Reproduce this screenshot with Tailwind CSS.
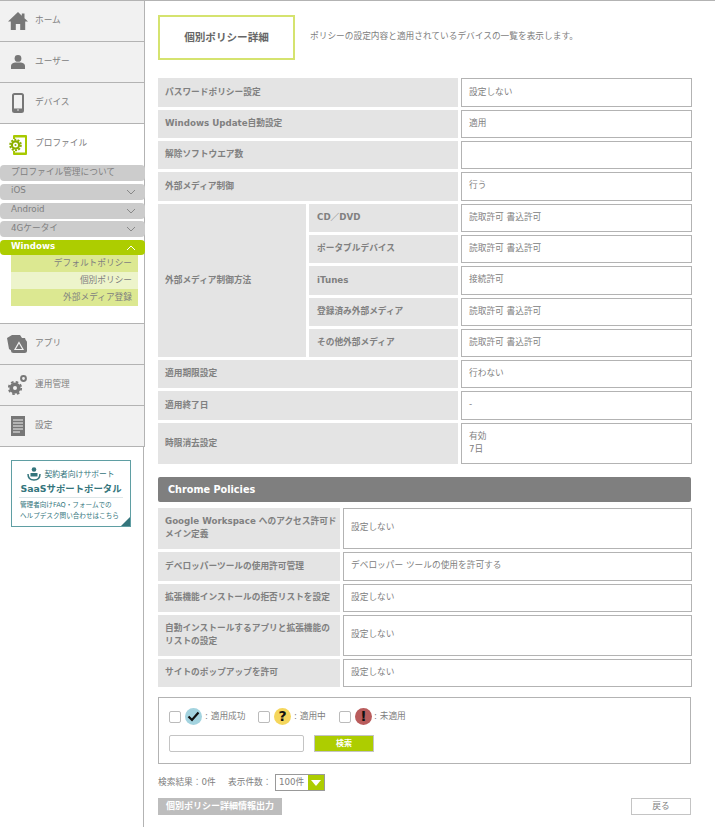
<!DOCTYPE html>
<html lang="ja">
<head>
<meta charset="utf-8">
<title>個別ポリシー詳細</title>
<script src="https://cdn.jsdelivr.net/npm/@tailwindcss/browser@4"></script>
</head>
<body class="bg-white font-['DejaVu_Sans','Noto_Sans_CJK_JP',sans-serif] text-[8.7px] leading-[13px] text-[#808080] overflow-hidden">
<div class="flex h-[827px] w-[715px] overflow-hidden border-t border-[#b3b3b3]">

  <!-- sidebar -->
  <aside class="w-[145px] shrink-0">
    <div class="w-[145px] border-r border-[#b3b3b3] bg-[#f1f1f1]">
      <a class="flex h-[41px] items-center border-b border-[#b3b3b3]">
        <span class="flex w-[35px] justify-center"><svg width="20" height="18" viewBox="0 0 20 18"><path fill="#777" d="M10 0 0 9.500h2.800V18h5v-6h4.400v6h5V9.500H20l-3.500-3.300V1.500h-2.700v2.200z"/></svg></span>
        <span class="pb-[2px]">ホーム</span>
      </a>
      <a class="flex h-[41px] items-center border-b border-[#b3b3b3]">
        <span class="flex w-[35px] justify-center"><svg width="14" height="14" viewBox="0 0 14 14"><ellipse cx="7" cy="3.400" rx="3.400" ry="3.400" fill="#777"/><path fill="#777" d="M0 14v-3q0-3 4-3.500h6q4 .5 4 3.500v3z"/></svg></span>
        <span class="pb-[2px]">ユーザー</span>
      </a>
      <a class="flex h-[41px] items-center border-b border-[#b3b3b3]">
        <span class="flex w-[35px] justify-center"><svg width="12" height="20" viewBox="0 0 12 20"><rect x="1" y="1" width="10" height="18" rx="1.500" fill="none" stroke="#777" stroke-width="2"/><rect x="1" y="15.500" width="10" height="3" fill="#777"/><circle cx="6" cy="17" r=".8" fill="#f1f1f1"/></svg></span>
        <span class="pb-[2px]">デバイス</span>
      </a>
    </div>
    <div class="w-[145px] border-r border-[#b3b3b3] pb-[17px]">
      <a class="flex h-[41px] items-center">
        <span class="flex w-[35px] justify-center"><svg width="18" height="20" viewBox="0 0 18 20"><path fill="#a8c900" d="M5 0h12a1 1 0 0 1 1 1v18a1 1 0 0 1-1 1H5a1 1 0 0 1-1-1v-3h2v1.500h10V2.500H6V4H4V1a1 1 0 0 1 1-1z"/><circle cx="6.500" cy="10" r="5.300" fill="none" stroke="#8cb000" stroke-width="2" stroke-dasharray="2 1.300"/><circle cx="6.500" cy="10" r="3.600" fill="none" stroke="#8cb000" stroke-width="2.200"/><circle cx="6.500" cy="10" r="1" fill="#8cb000"/></svg></span>
        <span class="pb-[3px]">プロファイル</span>
      </a>
      <ul class="flex flex-col gap-[2.750px]">
        <li class="flex h-[16px] w-[145px] items-center rounded-[4px] bg-[#cccccc] pl-[11px] pb-[2px]">プロファイル管理について</li>
        <li class="flex h-[16px] w-[145px] items-center justify-between rounded-[4px] bg-[#cccccc] pl-[11px] pr-[9px]"><span class="pb-[2px]">iOS</span><svg width="10" height="6" viewBox="0 0 10 6"><path d="M1 1l4 4 4-4" fill="none" stroke="#888" stroke-width="1"/></svg></li>
        <li class="flex h-[16px] w-[145px] items-center justify-between rounded-[4px] bg-[#cccccc] pl-[11px] pr-[9px]"><span class="pb-[2px]">Android</span><svg width="10" height="6" viewBox="0 0 10 6"><path d="M1 1l4 4 4-4" fill="none" stroke="#888" stroke-width="1"/></svg></li>
        <li class="flex h-[16px] w-[145px] items-center justify-between rounded-[4px] bg-[#cccccc] pl-[11px] pr-[9px]"><span class="pb-[2px]">4Gケータイ</span><svg width="10" height="6" viewBox="0 0 10 6"><path d="M1 1l4 4 4-4" fill="none" stroke="#888" stroke-width="1"/></svg></li>
        <li>
          <div class="flex h-[15px] w-[145px] items-center justify-between rounded-[4px] bg-[#adcd00] pl-[11px] pr-[9px] font-bold text-white"><span class="pb-[2px]">Windows</span><svg width="10" height="6" viewBox="0 0 10 6"><path d="M1 5l4-4 4 4" fill="none" stroke="#fff" stroke-width="1"/></svg></div>
          <div class="ml-[11px] w-[127px] text-right">
            <div class="h-[17px] bg-[#dce891] pr-[6px] leading-[16px]">デフォルトポリシー</div>
            <div class="h-[17px] bg-[#edf4cb] pr-[6px] leading-[16px]">個別ポリシー</div>
            <div class="h-[17px] bg-[#dce891] pr-[6px] leading-[16px]">外部メディア登録</div>
          </div>
        </li>
      </ul>
    </div>
    <div class="w-[145px] border-t border-r border-[#b3b3b3] bg-[#f1f1f1]">
      <a class="flex h-[41px] items-center border-b border-[#b3b3b3]">
        <span class="flex w-[35px] justify-center"><svg width="21" height="18" viewBox="0 0 21 18"><path fill="#777" d="M0 3l5-3h8l2 3h3l1 3v1H5v9l-3-2z"/><rect x="4" y="5" width="16" height="13" rx="2.500" fill="#777"/><path fill="none" stroke="#f1f1f1" stroke-width="1.200" d="M12 7.500l4 7H8z"/></svg></span>
        <span class="pb-[2px]">アプリ</span>
      </a>
      <a class="flex h-[41px] items-center border-b border-[#b3b3b3]">
        <span class="flex w-[35px] justify-center"><svg width="19" height="20" viewBox="0 0 19 20"><circle cx="7" cy="13" r="3.800" fill="none" stroke="#777" stroke-width="3.600"/><circle cx="7" cy="13" r="6.200" fill="none" stroke="#777" stroke-width="1.800" stroke-dasharray="2.600 2.270"/><circle cx="15.500" cy="3.500" r="2.400" fill="none" stroke="#777" stroke-width="2"/></svg></span>
        <span class="pb-[2px]">運用管理</span>
      </a>
      <a class="flex h-[41px] items-center border-b border-[#b3b3b3]">
        <span class="flex w-[35px] justify-center"><svg width="14" height="20" viewBox="0 0 14 20"><rect width="14" height="20" fill="#777"/><path stroke="#f1f1f1" stroke-width="1" d="M2 4h10M2 7h10M2 10h10M2 13h10M2 16h7"/></svg></span>
        <span class="pb-[2px]">設定</span>
      </a>
    </div>
    <div class="h-[420px] w-[144px] border-r border-[#b3b3b3] pt-[13px]">
      <div class="relative ml-[11px] h-[67px] w-[120px] border border-[#5f9ea3] text-[#34757c]">
        <div class="mt-[6px] flex h-[14px] items-center justify-center gap-[3px] text-[7.800px]">
          <svg class="mb-[1px]" width="14" height="14" viewBox="0 0 14 14"><circle cx="7" cy="2.500" r="2.300" fill="#34757c"/><path fill="#34757c" d="M3.500 6h7v3.500h-7z"/><path fill="none" stroke="#34757c" stroke-width="1.500" d="M1 7c0 4 2 6 6 6s6-2 6-6"/></svg>
          <span>契約者向けサポート</span>
        </div>
        <div class="whitespace-nowrap text-center text-[9.400px] font-bold leading-[15px]">SaaSサポートポータル</div>
        <div class="mx-[7px] mt-[1px] border-t border-[#dde6e8]"></div>
        <div class="mt-[2px] whitespace-nowrap pl-[8px] text-left text-[6.600px] leading-[11px]">管理者向けFAQ・フォームでの<br>ヘルプデスク問い合わせはこちら</div>
        <span class="absolute bottom-0 right-0 h-0 w-0 border-b-[9px] border-l-[9px] border-b-[#34757c] border-l-transparent"></span>
      </div>
    </div>
  </aside>

  <!-- main -->
  <main class="w-[570px] pl-[13px] pt-[14px]">
    <div class="flex items-center">
      <h1 class="flex h-[45px] w-[137px] items-center justify-center border-2 border-[#d5e36f] text-[10.600px] font-bold text-[#666]">個別ポリシー詳細</h1>
      <p class="mb-[2px] ml-[15px]">ポリシーの設定内容と適用されているデバイスの一覧を表示します。</p>
    </div>

    <div class="mt-[18px] flex flex-col gap-[3px] font-bold">
      <div class="flex h-[29px] gap-[3px]"><div class="flex w-[300px] items-center bg-[#e4e4e4] pl-[7px] pb-[1px]">パスワードポリシー設定</div><div class="flex w-[231px] items-center border border-[#b3b3b3] pl-[7px] pb-[1px] font-normal">設定しない</div></div>
      <div class="flex h-[28px] gap-[3px]"><div class="flex w-[300px] items-center bg-[#e4e4e4] pl-[7px] pb-[1px]">Windows Update自動設定</div><div class="flex w-[231px] items-center border border-[#b3b3b3] pl-[7px] pb-[2px] font-normal">適用</div></div>
      <div class="flex h-[28px] gap-[3px]"><div class="flex w-[300px] items-center bg-[#e4e4e4] pl-[7px] pb-[1px]">解除ソフトウエア数</div><div class="w-[231px] border border-[#b3b3b3]"></div></div>
      <div class="flex h-[29px] gap-[3px]"><div class="flex w-[300px] items-center bg-[#e4e4e4] pl-[7px] pb-[1px]">外部メディア制御</div><div class="flex w-[231px] items-center border border-[#b3b3b3] pl-[7px] pb-[2px] font-normal">行う</div></div>
      <div class="flex h-[153px] gap-[3px]">
        <div class="flex w-[148px] items-center bg-[#e4e4e4] pl-[7px] pb-[1px]">外部メディア制御方法</div>
        <div class="flex flex-col gap-[3px]">
          <div class="flex h-[28px] gap-[3px]"><div class="flex w-[149px] items-center bg-[#e4e4e4] pl-[8px] pb-[1px]">CD／DVD</div><div class="flex w-[231px] items-center border border-[#b3b3b3] pl-[7px] pb-[2px] font-normal">読取許可 書込許可</div></div>
          <div class="flex h-[28px] gap-[3px]"><div class="flex w-[149px] items-center bg-[#e4e4e4] pl-[8px] pb-[1px]">ポータブルデバイス</div><div class="flex w-[231px] items-center border border-[#b3b3b3] pl-[7px] pb-[2px] font-normal">読取許可 書込許可</div></div>
          <div class="flex h-[29px] gap-[3px]"><div class="flex w-[149px] items-center bg-[#e4e4e4] pl-[8px] pb-[1px]">iTunes</div><div class="flex w-[231px] items-center border border-[#b3b3b3] pl-[7px] pb-[2px] font-normal">接続許可</div></div>
          <div class="flex h-[28px] gap-[3px]"><div class="flex w-[149px] items-center bg-[#e4e4e4] pl-[8px] pb-[1px]">登録済み外部メディア</div><div class="flex w-[231px] items-center border border-[#b3b3b3] pl-[7px] pb-[2px] font-normal">読取許可 書込許可</div></div>
          <div class="flex h-[28px] gap-[3px]"><div class="flex w-[149px] items-center bg-[#e4e4e4] pl-[8px] pb-[1px]">その他外部メディア</div><div class="flex w-[231px] items-center border border-[#b3b3b3] pl-[7px] pb-[2px] font-normal">読取許可 書込許可</div></div>
        </div>
      </div>
      <div class="flex h-[28px] gap-[3px]"><div class="flex w-[300px] items-center bg-[#e4e4e4] pl-[7px] pb-[1px]">適用期限設定</div><div class="flex w-[231px] items-center border border-[#b3b3b3] pl-[7px] pb-[2px] font-normal">行わない</div></div>
      <div class="flex h-[29px] gap-[3px]"><div class="flex w-[300px] items-center bg-[#e4e4e4] pl-[7px] pb-[1px]">適用終了日</div><div class="flex w-[231px] items-center border border-[#b3b3b3] pl-[7px] pb-[2px] font-normal">-</div></div>
      <div class="flex h-[41px] gap-[3px]"><div class="flex w-[300px] items-center bg-[#e4e4e4] pl-[7px] pb-[1px]">時限消去設定</div><div class="flex w-[231px] items-center border border-[#b3b3b3] pl-[7px] pb-[2px] font-normal"><span>有効<br>7日</span></div></div>
    </div>

    <h2 class="mt-[13px] flex h-[25px] w-[533px] items-center rounded-[2px] bg-[#7f7f7f] pl-[10px] text-[9.700px] font-bold text-white">Chrome Policies</h2>

    <div class="mt-[6px] flex flex-col gap-[3px] font-bold">
      <div class="flex h-[41px] gap-[3px]"><div class="flex w-[182px] items-center whitespace-nowrap bg-[#e4e4e4] pl-[7px] pb-[1px]"><span>Google Workspace へのアクセス許可ド<br>メイン定義</span></div><div class="flex w-[349px] items-center border border-[#b3b3b3] pl-[7px] pb-[2px] font-normal">設定しない</div></div>
      <div class="flex h-[29px] gap-[3px]"><div class="flex w-[182px] items-center bg-[#e4e4e4] pl-[7px] pb-[1px]">デベロッパーツールの使用許可管理</div><div class="flex w-[349px] items-center border border-[#b3b3b3] pl-[7px] pb-[2px] font-normal">デベロッパー ツールの使用を許可する</div></div>
      <div class="flex h-[28px] gap-[3px]"><div class="flex w-[182px] items-center whitespace-nowrap bg-[#e4e4e4] pl-[7px] pb-[1px]">拡張機能インストールの拒否リストを設定</div><div class="flex w-[349px] items-center border border-[#b3b3b3] pl-[7px] pb-[2px] font-normal">設定しない</div></div>
      <div class="flex h-[41px] gap-[3px]"><div class="flex w-[182px] items-center whitespace-nowrap bg-[#e4e4e4] pl-[7px] pb-[1px]"><span>自動インストールするアプリと拡張機能の<br>リストの設定</span></div><div class="flex w-[349px] items-center border border-[#b3b3b3] pl-[7px] pb-[2px] font-normal">設定しない</div></div>
      <div class="flex h-[28px] gap-[3px]"><div class="flex w-[182px] items-center bg-[#e4e4e4] pl-[7px] pb-[1px]">サイトのポップアップを許可</div><div class="flex w-[349px] items-center border border-[#b3b3b3] pl-[7px] pb-[2px] font-normal">設定しない</div></div>
    </div>

    <div class="mt-[10px] h-[67px] w-[533px] border border-[#b3b3b3] pl-[10px] pt-[10px]">
      <div class="flex h-[17px] items-center">
        <span class="h-[12px] w-[12px] rounded-[2px] border border-[#bbb]"></span>
        <span class="ml-[4px] h-[17px] w-[17px] rounded-full bg-[#a3d3df]"><svg width="17" height="17" viewBox="0 0 17 17"><path d="M3.500 8.500l3.500 3.500 6.500-7.500" fill="none" stroke="#111" stroke-width="2.200"/></svg></span>
        <span class="ml-[3px] w-[40px] whitespace-nowrap">: 適用成功</span>
        <span class="ml-[13px] h-[12px] w-[12px] rounded-[2px] border border-[#bbb]"></span>
        <span class="ml-[4px] flex h-[17px] w-[17px] items-center justify-center rounded-full bg-[#f5d65c] text-[14px] font-bold text-[#111]">?</span>
        <span class="ml-[3px] w-[32px] whitespace-nowrap">: 適用中</span>
        <span class="ml-[13px] h-[12px] w-[12px] rounded-[2px] border border-[#bbb]"></span>
        <span class="ml-[4px] flex h-[17px] w-[17px] items-center justify-center rounded-full bg-[#b95c5c] text-[14px] font-bold text-[#111]">!</span>
        <span class="ml-[2px] whitespace-nowrap">: 未適用</span>
      </div>
      <div class="mt-[10px] flex items-center">
        <span class="h-[17px] w-[135px] rounded-[2px] border border-[#c4c4c4]"></span>
        <button class="ml-[10px] h-[17px] w-[60px] border border-[#c4c4c4] bg-[#adcd00] text-[8px] font-bold text-white">検索</button>
      </div>
    </div>

    <div class="mt-[10px] flex h-[17px] items-center">
      <span class="w-[70px]">検索結果：0件</span>
      <span class="w-[47px]">表示件数：</span>
      <span class="flex h-[17px] w-[50px] items-center border border-[#999] pl-[3px]">100件<span class="ml-auto flex h-full w-[16px] items-center justify-center bg-[#adcd00]"><span class="h-0 w-0 border-x-[5px] border-t-[6px] border-x-transparent border-t-white"></span></span></span>
    </div>
    <div class="mt-[7px] flex w-[533px] items-center justify-between">
      <button class="h-[17px] w-[124px] bg-[#bdbdbd] text-[9px] font-bold text-white">個別ポリシー詳細情報出力</button>
      <button class="h-[17px] w-[60px] border border-[#c4c4c4] text-[8.700px]">戻る</button>
    </div>
  </main>
</div>
</body>
</html>
